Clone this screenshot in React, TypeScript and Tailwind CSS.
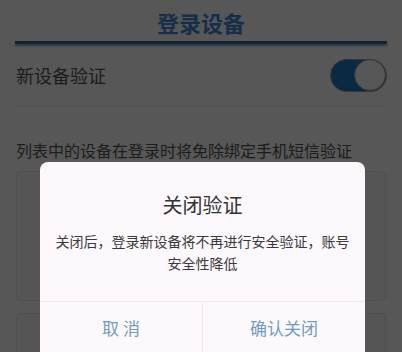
export default function App() {
  const font = { fontFamily: '"Noto Sans CJK SC", "Noto Sans", sans-serif' };
  return (
    <div className="relative w-[402px] h-[352px] overflow-hidden bg-[#575757]" style={font}>
      {/* Page behind the dialog */}
      <div className="px-[15px]">
        <div className="h-[41px] flex items-center justify-center">
          <span className="text-[22px] font-bold leading-none text-[#162e47] mt-[2px]">登录设备</span>
        </div>
        <div className="h-[3px] bg-[#18222d] shadow-[0_2px_2px_#213a53]" />
        <div className="h-[63px] flex items-center justify-between border-b border-[#505050] pl-px">
          <span className="text-[18px] text-[#1c1c1c]">新设备验证</span>
          <div className="w-[57px] h-[33px] rounded-full bg-[#0a2942] border border-[#363636] flex items-center justify-end">
            <div className="w-[32px] h-[32px] rounded-full bg-[#575757] border border-[#363636]" />
          </div>
        </div>
        <div className="pt-[32px] pl-px text-[16px] leading-[22px] text-[#1c1c1c]">列表中的设备在登录时将免除绑定手机短信验证</div>
        <div className="mt-[10px] flex flex-col gap-[12px] px-px">
          <div className="h-[130px] rounded-[4px] border border-[#4e4e4e] bg-[#555555]" />
          <div className="h-[60px] rounded-[4px] border border-[#4e4e4e] bg-[#555555]" />
        </div>
      </div>

      {/* Dialog */}
      <div className="absolute left-[40px] top-[162px] w-[325px] h-[220px] rounded-[8px] bg-[#fcf8fc] flex flex-col">
        <div className="pt-[28px] text-center text-[20px] leading-[30px] text-[#333333]">关闭验证</div>
        <div className="mt-[10px] px-[13px] text-center text-[14px] leading-[22px] text-[#3a3a3a]">
          关闭后，登录新设备将不再进行安全验证，账号安全性降低
        </div>
        <div className="mt-[27px] border-t border-[#f0e9f0] flex h-[52px]">
          <div className="flex-1 flex items-center justify-center text-[17px] text-[#6f9cc6]">取 消</div>
          <div className="w-px bg-[#f0e9f0]" />
          <div className="flex-1 flex items-center justify-center text-[17px] text-[#6f9cc6]">确认关闭</div>
        </div>
      </div>
    </div>
  );
}
